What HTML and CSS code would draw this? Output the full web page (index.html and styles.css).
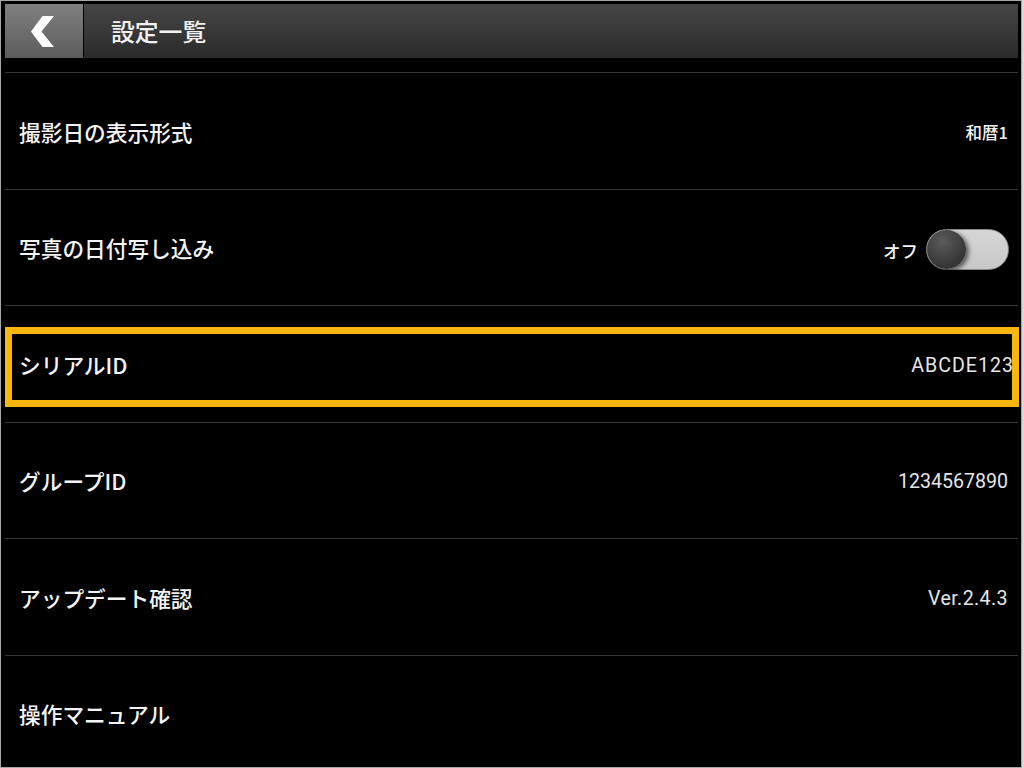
FILE: index.html
```html
<!DOCTYPE html>
<html lang="ja">
<head>
<meta charset="utf-8">
<title>設定一覧</title>
<link rel="stylesheet" href="styles.css">
</head>
<body>
<div class="frame">
  <header class="header">
    <div class="back">
      <svg class="chev" width="23" height="31" viewBox="0 0 23 31">
        <polygon points="11.5,0 23,0 10.5,15.5 23,31 11.5,31 0,15.5" fill="#ffffff"/>
      </svg>
    </div>
    <div class="titlebar"><span class="title">設定一覧</span></div>
  </header>
  <div class="list">
    <div class="row">
      <span class="label">撮影日の表示形式</span>
      <span class="value cjk">和暦1</span>
    </div>
    <div class="row">
      <span class="label">写真の日付写し込み</span>
      <span class="switch-wrap">
        <span class="value cjk small">オフ</span>
        <span class="switch"><span class="knob"></span></span>
      </span>
    </div>
    <div class="row">
      <span class="label">シリアルID</span>
      <span class="value serial">ABCDE123</span>
      <span class="highlight"></span>
    </div>
    <div class="row">
      <span class="label">グループID</span>
      <span class="value">1234567890</span>
    </div>
    <div class="row">
      <span class="label">アップデート確認</span>
      <span class="value ver">Ver.2.4.3</span>
    </div>
    <div class="row">
      <span class="label">操作マニュアル</span>
    </div>
  </div>
</div>
</body>
</html>
```
FILE: styles.css
```css
html, body {
  margin: 0;
  padding: 0;
  background: #d8d8d8;
}
.frame {
  box-sizing: border-box;
  width: 1022px;
  height: 768px;
  border: 1px solid #a8a8a8;
  background: #000;
  padding: 3px 3px 0 4px;
  overflow: hidden;
  font-family: "Noto Sans CJK JP", "Noto Sans", sans-serif;
  color: #f0f0f0;
}
.header {
  display: flex;
  height: 54px;
  gap: 1px;
}
.back {
  width: 78px;
  flex: none;
  background: linear-gradient(#808080, #5c5c5c);
  display: flex;
  align-items: center;
  justify-content: center;
  padding-right: 4px;
  box-sizing: border-box;
}
.chev {
  display: block;
  margin-top: 1px;
}
.titlebar {
  flex: 1;
  background: linear-gradient(#464646, #2a2a2a);
  display: flex;
  align-items: center;
  padding-left: 27px;
}
.title {
  font-size: 23.8px;
  font-weight: 500;
  color: #f2f2f2;
  line-height: 1;
}
.list {
  margin-top: 14px;
}
.row {
  position: relative;
  border-top: 1px solid #383838;
  height: 115.5px;
  display: flex;
  align-items: center;
  justify-content: space-between;
  padding: 0 10px 0 14px;
}
.label {
  font-size: 21.7px;
  font-weight: 500;
  color: #f4f4f4;
  line-height: 1;
  margin-top: 2px;
}
.value {
  font-family: "Roboto", "Noto Sans", sans-serif;
  font-size: 19.6px;
  color: #e6e6e6;
  line-height: 1;
  margin-top: 4px;
}
.value.cjk {
  font-family: "Noto Sans CJK JP", sans-serif;
  font-size: 16.5px;
  font-weight: 500;
  margin-top: 2px;
  color: #f4f4f4;
}
.value.small {
  font-size: 17.5px;
  margin-top: 2px;
}
.value.serial {
  letter-spacing: 1px;
  margin-right: -6px;
}
.value.ver {
  letter-spacing: 0.4px;
}
.switch-wrap {
  display: flex;
  align-items: center;
  gap: 8px;
  margin-right: -1px;
  margin-top: 4px;
}
.switch {
  position: relative;
  box-sizing: border-box;
  width: 83px;
  height: 41px;
  border-radius: 21px;
  background: linear-gradient(#d6d6d6, #c8c8c8);
  border: 1px solid #8a8a8a;
}
.knob {
  position: absolute;
  left: 0;
  top: 0;
  width: 39px;
  height: 39px;
  border-radius: 50%;
  background: radial-gradient(circle at 40% 30%, #5a5a5a, #333 75%);
  box-shadow: 3px 2px 4px rgba(0, 0, 0, 0.55);
}
.highlight {
  position: absolute;
  left: 0;
  right: -1px;
  top: 21px;
  height: 80px;
  box-sizing: border-box;
  border: 7px solid #f9b60f;
  pointer-events: none;
}
```
